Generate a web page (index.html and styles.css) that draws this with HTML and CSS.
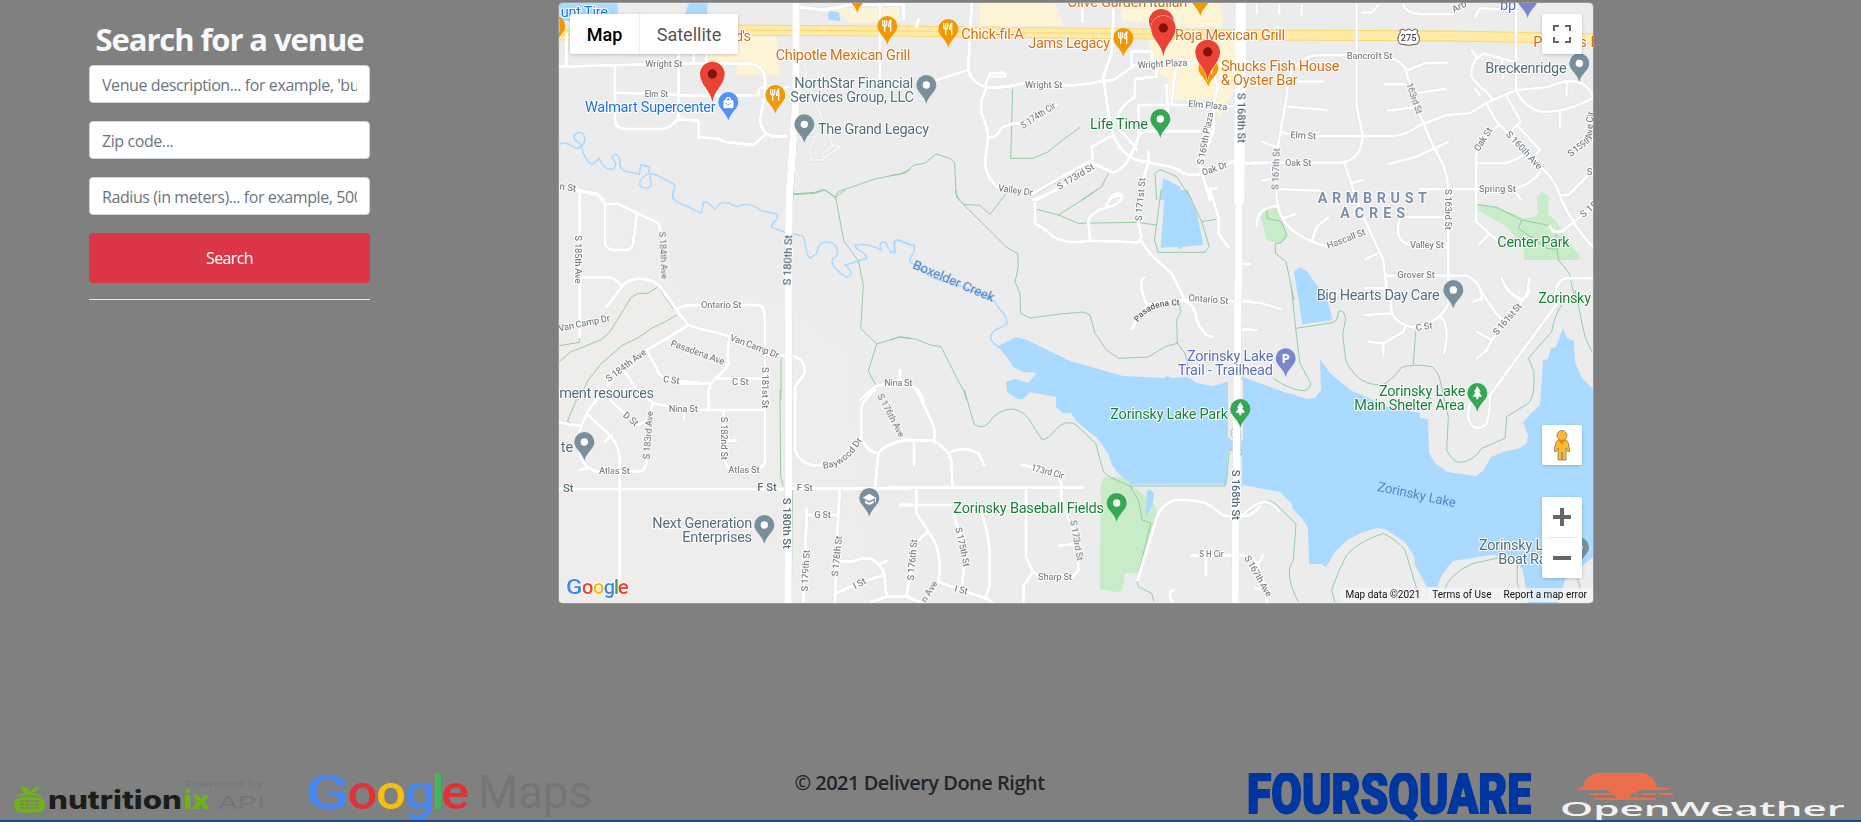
FILE: index.html
```html
<!DOCTYPE html>
<html lang="en">
<head>
<meta charset="utf-8">
<title>Delivery Done Right</title>
<link rel="stylesheet" href="styles.css">
</head>
<body>
<main class="content">
  <section class="search">
    <h2 class="search-title">Search for a venue</h2>
    <form class="search-form">
      <input class="field" type="text" placeholder="Venue description... for example, 'burgers'">
      <input class="field" type="text" placeholder="Zip code...">
      <input class="field" type="text" placeholder="Radius (in meters)... for example, 5000">
      <button class="submit" type="button">Search</button>
    </form>
    <hr class="rule">
  </section>
  <section class="map">
    <svg class="map-canvas" viewBox="559 3 1034 600">
      <defs>
        <g id="pin"><path d="M0 0C-6-26-30-34-30-56A30 30 0 1 1 30-56C30-34 6-26 0 0Z"/></g>
        <g id="dot"><use href="#pin"/><circle cy="-56" r="11" fill="#fff"/></g>
        <g id="food"><use href="#pin"/><path d="M-14-73v11q0 6 6 6v17M-8-73v13M-2-73v11q0 6-6 6M10-39v-34q-6 4-6 18h6" fill="none" stroke="#fff" stroke-width="4"/></g>
        <g id="tree"><use href="#pin"/><path d="M0-77l10 17h-5l9 15H3v8h-6v-8h-11l9-15h-5z" fill="#fff"/></g>
        <g id="marker"><path class="marker-body" d="M0 0C-3-36-37-52-37-86A37 37 0 1 1 37-86C37-52 3-36 0 0Z" fill="#ea4335"/><circle cy="-86" r="14" fill="#811411"/></g>
        <path id="pasadena-ct" d="M744 397Q775 348 850 346L900 344"/>
        <path id="baywood-dr" d="M820 236Q890 232 936 152L945 135"/>
      </defs>
      <rect x="559" y="3" width="1034" height="600" fill="#ececec"/>
      <path d="M559 190L660 210 680 290 780 300 850 350 870 603H559Z" fill="#eeedec"/>

      <!-- commercial blocks -->
      <g class="shop">
        <path class="nw" d="M460 110H680L690 225H560V195H470ZM840 25H1050V68H900Z"/>
        <path class="n" d="M0 10H28V70H0ZM270 10H495L520 78H270ZM690 10H990L1000 80H790L780 65H700ZM780 120H1035V260L990 350 970 330V300H830L835 240 780 200Z"/>
      </g>

      <!-- parks -->
      <g class="park">
        <path class="ne" d="M60 640L112 618 125 665 145 710 120 732 80 720ZM712 612L770 620 850 655 885 650 893 640 890 590 905 575 927 590 925 645 945 660 990 730 1018 765V780H852V745L800 680 712 630Z"/>
        <path class="s" d="M632 290L640 262 700 262 800 352 790 420 745 550 705 548 697 600 680 607 630 598Z"/>
      </g>

      <!-- water -->
      <g class="water">
        <path d="M997.5 346.5L1016 337 1025 339 1070 361 1123 376 1163 378 1167 376 1172 378 1187 377 1197 383 1213 386 1227 382 1243 377 1278 390 1307 399 1315 398 1321 390 1320 359 1330 373 1350 390 1373 400 1385 406 1420 413V418L1428 419 1429 453 1435 463 1447 472 1476 476 1483 471 1491 457 1503 452 1520 448 1527 443 1528 435 1523 423 1529 415 1540 405 1543 360 1548 359 1551 348 1556 347 1563 328 1567 338 1574 341 1575 362 1582 378 1593 389V557L1565 580 1558 603H1528L1523 570 1510 556 1490 555 1453 561 1442 575 1437 587 1427 587 1415 565 1414 556 1405 542 1385 529 1377 528 1363 532 1347 540 1335 552 1326 567 1322 564H1309L1308 528 1303 520 1292 508V504L1280 492 1243 485V487L1228 484.500H1131L1117 472 1112 465 1108 453 1097 438 1077 422 1071 413 1063 413 1056 407V397L1030 392 1023 399H1018L1007 392 1006 382 1015 379 1028 383 1037 373 1023 372 1013 367 1007 357Z"/>
        <path class="nw" d="M28 10H203V62H28ZM417 10H472V62H395ZM832 40L845 33 868 37 870 63 838 60Z"/>
        <path class="n" d="M820 535L870 560 885 600H810Z"/>
        <path class="c" d="M825 0H885L920 65 940 165 880 170 872 178 862 170 812 173Z"/>
        <path class="ne" d="M162 815L180 802 200 812 240 870 262 900 278 960 187 973 175 895Z"/>
        <path class="s" d="M770 305L780 298 792 310 788 345 767 380Z"/>
      </g>
      <path d="M1228 380H1243V440L1240 441H1232L1228 437ZM1228 450H1242V487H1226Z" fill="#ececec"/>
      <g class="creek">
        <path class="nw" d="M28 432C45 425 60 432 78 445 100 445 110 420 100 402 85 390 65 405 75 420 95 430 95 440 100 460 112 480 118 495 128 493L147 475C155 490 165 510 185 508 205 500 195 485 185 470 195 460 205 460 210 480 207 500 215 515 235 515L268 522 272 495 298 500 297 520C275 530 260 550 275 562 300 570 310 555 300 535 295 510 315 520 375 555 378 570 360 580 370 598"/>
        <path class="w" d="M370 0C360 30 385 40 410 48 430 55 440 70 455 68L460 38C475 30 485 50 495 58 510 35 520 30 560 50 600 35 605 45 635 63L680 72C690 95 665 90 665 112L710 128 758 137C770 160 765 195 780 205L800 190C805 150 830 155 845 158 865 170 870 195 850 205 835 225 870 250 890 262 915 255 900 235 885 225L950 205C950 180 915 185 915 165 945 160 975 170 993 180 985 155 1000 150 1010 162 1015 180 1025 190 1035 188 1040 170 1020 155 1040 150L1080 162"/>
        <path class="c" d="M0 188C25 190 5 160 20 150 45 150 50 170 72 165 80 195 55 195 60 215L130 265 220 290 315 335C325 360 355 375 350 402 325 420 310 415 302 440 300 455 315 460 325 472"/>
      </g>

      <!-- trails -->
      <g class="trail">
        <path class="nw" d="M728 582L795 577 822 568 855 592 865 575 975 537 1050 522 1080 508M738 425L728 600"/>
        <path class="n" d="M0 527L45 520 72 495 105 490 138 462 180 475 194 488 198 580 208 600M368 268L362 475H428L470 458 525 415 570 382M655 520L635 560 575 600M800 600L795 520 810 508 860 530 905 600"/>
        <path class="n" stroke-dasharray="12 6" d="M440 580L610 485"/>
        <path class="ne" d="M80 625L82 655 125 665 140 705 125 727 105 732 107 760 138 785 162 900M710 613L770 622 845 660 920 675 948 700 955 780 988 820 1005 900M845 660L835 685 880 715 920 745 950 748"/>
        <path class="w" d="M28 515L60 487 155 448 180 425 243 323 265 310H293L325 290M28 467L88 457V440M325 290L370 357M380 375L350 393 305 415 265 443 215 467 150 525 115 570 85 630M728 14L795 10 825 0 857 22 885 0M857 22L882 155 925 212 940 285 932 415 980 462 1045 442 1080 445M980 462L955 543 980 590M693 500V630"/>
        <path class="c" d="M198 0L200 22 220 43 270 46 300 73 345 15 355 0M220 43L350 172 383 190 385 230 375 275 390 310 392 370 420 384 510 372 580 366 600 375 615 430 650 480 685 505 775 501 825 470 862 460 885 490 895 530M862 460L860 390 872 365 868 340M440 58L505 75 600 15 620 0M505 75L565 100 740 97 800 105 813 0M800 105L793 150 805 187H945L958 170 935 95 890 0M935 95L980 88M0 450L30 440 80 448 120 465 153 470 205 573 220 600 230 630"/>
        <path class="sw" d="M80 28L52 95 85 105M690 0L692 260 700 290M727 300L724 635"/>
        <path class="s" d="M223 0L252 102Q275 120 295 100 325 55 370 57 400 65 415 85L455 148Q475 150 500 115 525 90 555 102L617 160 640 245Q650 260 720 288L745 330 757 390 783 400 740 570 745 590 785 610 792 635M720 288H1005L1010 265 1018 180 1055 180V195H1040M1065 370L1110 335M1030 115Q1015 130 1030 145H1052V115"/>
        <path class="se" d="M155 0L167 115 180 220 212 280Q210 300 190 302 150 300 100 265M167 115L280 98Q295 90 295 65 310 55 317 85L308 135 318 215Q340 255 365 270 400 290 435 282 460 265 485 232 520 220 575 230 595 245 600 270L625 380 620 480Q640 520 660 517 700 515 725 475L795 445 800 380 865 340Q885 325 882 245L865 205 935 125Q945 70 965 45M527 125L520 222M1005 0L1035 140 1055 185M0 670L25 665Q70 615 105 640L168 702 160 810Q130 850 175 935M285 938L275 900Q295 840 320 795 355 755 430 730 470 750 495 780L540 930M610 910Q625 850 700 820L770 805 832 815V880L850 935M1012 865L1022 900"/>
      </g>

      <!-- highway -->
      <path class="hwy-edge" d="M559 35L720 30 890 31 1250 35 1450 36 1593 39"/>
      <path class="hwy" d="M559 35L720 30 890 31 1250 35 1450 36 1593 39"/>
      <path class="hwy-mid" d="M559 35L720 30 890 31 1250 35"/>

      <!-- local streets -->
      <g class="road">
        <path class="nw" d="M28 200L420 190H600Q645 200 645 240V280L630 360Q635 400 670 410H710M50 100V200M195 198V360Q195 385 225 387H340Q360 385 385 355M198 278L385 285 430 288 625 285 628 265 645 260M385 160V358L445 362V412L505 415 520 425 610 435 645 405M430 160V185M470 160V190M750 22L820 30 900 15 1060 14V60M990 20V240M715 260L700 265M75 572L140 580 160 600M90 570V600"/>
        <path class="n" d="M245 10L235 200Q235 245 290 262 340 265 400 250M235 210L140 240M290 260L275 300V340Q300 400 292 430L285 490Q290 540 330 565M297 412Q320 415 335 385 350 370 395 370M470 340L500 315M288 250L300 220 340 218Q350 225 345 230H305M520 255Q560 260 640 242L670 240 735 195 890 190 960 185M672 10L665 160 640 230 655 340 668 400Q690 460 740 480L800 492Q860 500 880 520 920 530 940 520L1010 495 1025 485 1080 490M725 195V155H785L790 185M800 200V230L735 237V290Q690 320 685 345L690 390 735 440 740 450M860 205Q850 240 845 310M830 255L835 380M745 400V315H960L1030 320M960 395H770Q745 395 740 430L720 470Q700 510 670 518L610 490 605 440 670 405M605 480L430 580M610 510L440 600M775 455V490L755 550M960 190L985 260 970 310 970 395 930 500 960 600M960 565H980M670 590L695 585M578 20V65M85 60L80 80"/>
        <path class="ne" d="M170 200Q190 165 240 165H380Q490 165 500 220L540 345 580 440Q620 500 625 560V900M170 195Q145 210 140 290L110 460V560Q105 660 170 700 215 730 265 740M350 10V320L367 400Q370 480 300 488H40M125 395Q140 405 230 408H460Q500 405 540 375L620 345 690 340 740 308 830 270 920 262 970 245Q1040 235 1058 290M10 490H80M145 320L260 330M175 245H250M500 212L555 190 622 188M435 252H495M525 280L615 267M443 332L525 322M445 492L530 470 625 425M65 425L105 440M65 542L105 535M105 567L240 572M312 485L340 570 370 650 430 780 440 865M340 548L370 540M540 567H710L800 572M440 827H680Q730 850 725 900M375 865H440M375 778L410 762M480 652H620M480 655Q465 700 485 720 500 745 620 740M828 10V270Q850 320 900 335 970 340 1058 295M695 150L712 175 730 160 820 185 830 195M712 170Q690 200 695 230 720 265 740 275L755 295M740 310Q770 370 780 375L900 500Q950 540 960 590 1000 680 1058 740M775 375L720 430Q705 460 708 490V665L770 720M708 490H795Q830 480 850 465M830 375L900 450 880 470M800 290L843 365 810 395M900 515Q880 550 820 567L843 600M960 585H985L1050 520M930 680L940 695H965L1058 620M785 835Q800 880 850 900M868 835L860 890M1058 835H980Q945 840 945 900M215 725L230 680 265 652M50 680Q50 620 110 618M130 655L165 642M715 735L745 705M790 235L785 175M980 285V250M960 380V340M50 15V40M118 15V40M185 15V45M365 38H395L415 15M490 15Q500 40 540 42H640M705 50L720 25 815 30M705 265L720 285"/>
        <path class="w" d="M75 0L145 15 165 42H205L325 100 333 125M165 42V160Q170 178 190 180H235Q250 170 250 155L260 75M88 0V440M90 263H180Q195 265 215 288M170 350Q215 290 225 280 260 255 310 275 330 285 345 310L380 360 415 405M385 355Q400 345 440 345H620Q645 345 645 385V630M415 405Q440 415 500 428L540 440Q530 470 535 520 520 550 500 560 470 590 475 630M415 405Q370 435 290 480L240 520M290 480L330 555 350 570 480 582M380 580H480M500 565H645M220 540Q250 580 265 610M190 565L140 630M545 430L550 445M685 497H725Q765 505 765 550L735 590V630M1050 540V570L975 590 930 630"/>
        <path class="c" d="M435 40V100Q470 120 490 140 530 165 600 152L745 157 755 140 745 100M755 155Q780 195 800 210L845 250 880 320M430 30L500 0M600 150L595 90Q605 65 650 52 690 45 697 20 685 0 665 20L650 45M960 0L985 80V130L1015 172M762 262Q750 270 755 300L770 345M770 345L725 415M770 345Q820 335 880 330 920 350 920 390 940 440 968 440M880 325Q900 340 1030 335M1040 222H1080M1040 333H1080M1040 418H1080M100 630Q90 600 70 590M30 540V580"/>
        <path class="sw" d="M140 30Q110 60 90 120 75 190 110 230 130 245 150 245H270Q290 240 292 200M28 98L95 108M110 70L150 110Q205 150 208 200V290M110 235L90 240M180 30L240 85 265 105 290 90 310 40 360 50M265 0L310 40M440 60H645V215Q640 240 600 240H540Q522 220 520 190V60M475 60V0M402 65V90M520 150L558 152M165 155L185 135M28 297H700M208 295V570M735 0V180Q750 220 790 227H850M975 0Q930 40 935 60V150Q960 190 985 190L975 295M985 190Q1010 155 1080 150M725 295H1080M870 297L865 370 855 635M770 355V375H865M770 375L760 635M870 515H905Q940 500 970 508 1010 540 1005 580L1010 620M990 522L1010 512M1000 555L900 590 855 612M1080 620H1010L965 635M1050 345H1080"/>
        <path class="s" d="M0 165L35 150 130 152Q180 180 185 220L187 295M130 152Q140 130 125 95L80 0M72 155V225M175 190Q220 165 265 190L283 225M0 293H580M395 225L490 245Q515 260 515 295V340L560 440 565 540 550 560M80 295V370L115 425Q160 480 145 575L210 600 290 625 310 640M30 345H185M190 370L205 420 225 510 215 590M275 370Q300 440 298 500V590L285 625M115 425L75 460 50 615M0 620H50L100 640 145 580M408 295V500L428 545 400 590V635M428 545L450 560M508 467L555 462M743 570L800 385Q820 335 860 330 900 328 950 340 980 360 1000 377L1030 380 1080 375 1110 350M905 497H1060M948 500V555M850 600Q830 610 848 635M1095 595H1110"/>
        <path class="se" d="M0 35L60 38 125 58M0 120H50M450 0 455 65Q465 100 520 112 600 100 625 40M375 75L455 70M605 85Q630 110 612 190M385 155L430 160 490 125 495 110M430 160V195M870 0L755 150 740 180 710 205M710 125L755 150M800 0L840 30M720 0 765 65 790 95M700 35L725 25M955 35L750 315Q750 370 740 400 725 420 700 410 675 390 690 340M0 680Q50 635 75 635 100 640 118 665M35 800Q75 850 80 938M50 830 70 795"/>
      </g>
      <g class="road major">
        <path d="M796 3L796 100 789 200 788 603M1242 3L1239 195 1235 603"/>
        <path d="M1241 3L1239 200" stroke-width="11"/>
      </g>
      <g class="road inner"><path class="nw" d="M765 190L770 240 850 440 870 438M805 400Q770 440 785 480H815L870 440M740 410H800M815 465L850 430"/></g>

      <!-- street names -->
      <g class="street">
        <g class="nw"><text x="286" y="201" textLength="111">Wright St</text><text x="284" y="291" textLength="70" lengthAdjust="spacingAndGlyphs">Elm St</text><text x="28" y="568" transform="rotate(8 28 568)">n St</text></g>
        <g class="n"><text x="405" y="264" textLength="112">Wright St</text><text x="743" y="205" textLength="150" transform="rotate(-3 743 205)">Wright Plaza</text><text x="894" y="320" textLength="118" transform="rotate(5 894 320)">Elm Plaza</text><text x="400" y="386" textLength="118" lengthAdjust="spacingAndGlyphs" transform="rotate(-33 400 386)">S 174th Cir</text><text x="508" y="570" textLength="125" transform="rotate(-31 508 570)">S 173rd St</text><text x="323" y="573" textLength="105" transform="rotate(8 323 573)">Valley Dr</text><text x="940" y="527" textLength="78" lengthAdjust="spacingAndGlyphs" transform="rotate(-19 940 527)">Oak Dr</text><text x="940" y="496" textLength="160" transform="rotate(-79 940 496)">S 169th Plaza</text></g>
        <g class="ne"><text x="320" y="177" textLength="137">Bancroft St</text><text x="151" y="414" textLength="77" transform="rotate(3 151 414)">Elm St</text><text x="135" y="497" textLength="79">Oak St</text><text x="717" y="576" textLength="111">Spring St</text><text x="510" y="743" textLength="102">Valley St</text><text x="472" y="835" textLength="113">Grover St</text><text x="265" y="747" textLength="122" transform="rotate(-21 265 747)">Hascall St</text><text x="114" y="570" textLength="125" transform="rotate(-88 114 570)">S 167th St</text><text x="498" y="252" textLength="97" transform="rotate(71 498 252)">163rd St</text><text x="616" y="567" textLength="123" transform="rotate(90 616 567)">S 163rd St</text><text x="796" y="404" textLength="145" transform="rotate(47 796 404)">S 160th Ave</text><text x="716" y="456" textLength="78" transform="rotate(-57 716 456)">Oak St</text><text x="992" y="472" textLength="84" transform="rotate(-38 992 472)">S 159th</text><text x="1056" y="418" textLength="84" transform="rotate(-87 1056 418)">Ave Cir</text><text x="1030" y="654" transform="rotate(-40 1030 654)">S 15</text><text x="642" y="38" transform="rotate(-28 642 38)">Arb</text><text x="1040" y="525">S</text></g>
        <g class="w"><text x="76" y="136" textLength="145" transform="rotate(90 76 136)">S 185th Ave</text><text x="328" y="125" textLength="143" transform="rotate(87 328 125)">S 184th Ave</text><text x="28" y="425" textLength="157" transform="rotate(-12 28 425)">Van Camp Dr</text><text x="453" y="354" textLength="121">Ontario St</text><text x="176" y="577" textLength="144" transform="rotate(-37 176 577)">S 184th Ave</text><text x="360" y="467" textLength="170" transform="rotate(20 360 467)">Pasadena Ave</text><text x="538" y="450" textLength="155" transform="rotate(21 538 450)">Van Camp Dr</text><text x="338" y="576" textLength="50" transform="rotate(8 338 576)">C St</text><text x="546" y="585" textLength="50">C St</text><text x="637" y="531" textLength="124" transform="rotate(90 637 531)">S 181st St</text><text x="1003" y="588" textLength="84">Nina St</text></g>
        <g class="c"><text x="895" y="332" textLength="120" transform="rotate(5 895 332)">Ontario St</text><text class="dark"><textPath href="#pasadena-ct">Pasadena Ct</textPath></text><text x="755" y="94" textLength="130" transform="rotate(-85 755 94)">S 171st St</text></g>
        <g class="sw"><text x="356" y="65" textLength="88">Nina St</text><text x="217" y="78" textLength="50" transform="rotate(41 217 78)">D St</text><text x="300" y="209" textLength="145" transform="rotate(-86 300 209)">S 183rd Ave</text><text x="512" y="80" textLength="130" transform="rotate(90 512 80)">S 182nd St</text><text x="147" y="253" textLength="93">Atlas St</text><text x="535" y="249" textLength="94">Atlas St</text><text x="740" y="303" textLength="48">F St</text><text><textPath href="#baywood-dr">Baywood Dr</textPath></text><text x="980" y="18" textLength="143" transform="rotate(62 980 18)">S 176th Ave</text><text x="793" y="383" textLength="50">G St</text><text x="773" y="605" textLength="125" transform="rotate(-87 773 605)">S 179th St</text><text x="864" y="560" textLength="122" transform="rotate(-84 864 560)">S 178th St</text><text x="915" y="598" textLength="40" transform="rotate(-28 915 598)">I St</text></g>
        <g class="s"><text x="422" y="241" textLength="100" lengthAdjust="spacingAndGlyphs" transform="rotate(15 422 241)">173rd Cir</text><text x="540" y="392" textLength="123" transform="rotate(80 540 392)">S 173rd St</text><text x="196" y="414" textLength="120" transform="rotate(78 196 414)">S 175th St</text><text x="71" y="572" textLength="124" transform="rotate(-85 71 572)">S 176th St</text><text x="444" y="570" textLength="102">Sharp St</text><text x="192" y="604" textLength="40" transform="rotate(14 192 604)">I St</text><text x="108" y="640" transform="rotate(-58 108 640)">n Ave</text><text x="928" y="502" textLength="73" lengthAdjust="spacingAndGlyphs">S H Cir</text></g>
        <g class="se"><text x="529" y="123" textLength="50" transform="rotate(-9 529 123)">C St</text><text x="771" y="137" textLength="116" transform="rotate(-49 771 137)">S 161st St</text><text x="12" y="803" textLength="138" transform="rotate(60 12 803)">S 167th Ave</text></g>
        <g class="large"><g class="w"><text x="723" y="287" textLength="152" transform="rotate(-88 723 287)">S 180th St</text></g><g class="sw"><text x="698" y="323" textLength="153" transform="rotate(90 698 323)">S 180th St</text><text x="39" y="306">St</text><text x="622" y="304" textLength="58">F St</text></g><g class="n"><text x="1042" y="278" textLength="151" transform="rotate(90 1042 278)">S 168th St</text></g><g class="s"><text x="1026" y="239" textLength="151" transform="rotate(90 1026 239)">S 168th St</text></g></g>
      </g>
      <g class="ne shield"><path d="M480 91L487 87 497 92 506 87 516 92 525 87 533 91 531 98Q545 118 532 132L506 136 480 132Q467 118 481 98Z"/><text x="482" y="122" textLength="48">275</text></g>

      <!-- place pins -->
      <g class="nw"><use href="#food" x="16" y="134" fill="#f29900"/><use href="#food" x="1012" y="134" fill="#f29900"/><use href="#food" x="676" y="341" fill="#f29900"/><use href="#pin" x="922" y="39" fill="#f29900"/><use href="#pin" x="535" y="362" fill="#5491f5"/><path d="M522 302h27v21h-27z" fill="#fff" stroke="#fff" stroke-width="3"/><path d="M528 301q0-8 7-8t7 8" fill="none" stroke="#fff" stroke-width="3.500"/><path d="M528 309q7 10 14 0" fill="none" stroke="#5491f5" stroke-width="3"/><use href="#dot" x="763" y="429" fill="#78909c"/></g>
      <g class="n"><use href="#food" x="175" y="143" fill="#f29900"/><use href="#food" x="700" y="170" fill="#f29900"/><use href="#food" x="955" y="260" fill="#f29900"/><use href="#pin" x="931" y="48" fill="#f29900"/><use href="#dot" x="109" y="311" fill="#78909c"/><use href="#dot" x="811" y="413" fill="#34a853"/></g>
      <g class="ne"><use href="#dot" x="1018" y="246" fill="#78909c"/><use href="#pin" x="863" y="54" fill="#7986cb"/><use href="#dot" x="640" y="926" fill="#78909c"/></g>
      <g class="sw"><use href="#dot" x="103" y="212" fill="#78909c"/><use href="#dot" x="643" y="461" fill="#78909c"/><use href="#pin" x="958" y="380" fill="#78909c"/><path d="M938 323l20-12 20 12-20 10zM945 331v8q13 10 26 0v-8l-13 7zM975 324h3v13h-3z" fill="#fff"/></g>
      <g class="s"><use href="#dot" x="680" y="395" fill="#34a853"/><use href="#tree" x="1051" y="113" fill="#34a853"/></g>
      <g class="se"><use href="#tree" x="712" y="365" fill="#34a853"/><use href="#pin" x="137" y="261" fill="#7986cb"/><text x="126" y="220" class="parking">P</text><use href="#dot" x="1017" y="828" fill="#78909c"/></g>

      <!-- place names -->
      <g class="poi">
        <g class="nw"><g class="blue"><text x="32" y="50" textLength="142">unt Tire</text><text x="105" y="337" textLength="392">Walmart Supercenter</text></g><g class="orange"><text x="555" y="122" textLength="48">d's</text><text x="677" y="180" textLength="404">Chipotle Mexican Grill</text></g><g class="slate"><text x="733" y="264" textLength="357">NorthStar Financial</text><text x="721" y="307" textLength="371">Services Group, LLC</text><text x="804" y="402" textLength="333">The Grand Legacy</text></g></g>
        <g class="n"><g class="orange"><text x="214" y="117" textLength="187">Chick-fil-A</text><text x="415" y="144" textLength="245">Jams Legacy</text><text x="532" y="22" textLength="360">Olive Garden Italian</text><text x="855" y="120" textLength="330">Roja Mexican Grill</text><text x="993" y="213" textLength="355">Shucks Fish House</text><text x="993" y="255" textLength="230">&amp; Oyster Bar</text></g><g class="green"><text x="600" y="387" textLength="174">Life Time</text></g></g>
        <g class="ne"><text class="violet" x="780" y="30">bp</text><g class="orange"><text x="880" y="140">P</text><text x="1018" y="140">s F</text></g><g class="slate"><text x="736" y="219" textLength="244">Breckenridge</text><text x="230" y="899" textLength="369">Big Hearts Day Care</text></g><g class="green"><text x="772" y="741" textLength="217">Center Park</text><text x="895" y="910" textLength="158">Zorinsky</text></g><g class="area"><text x="233" y="608" textLength="328">ARMBRUST</text><text x="301" y="654" textLength="194">ACRES</text></g></g>
        <g class="w slate"><text x="28" y="624" textLength="284">ment resources</text></g>
        <g class="c"><text class="creek-name" x="66" y="233" textLength="262" transform="rotate(23 66 233)">Boxelder Creek</text><g class="violet"><text x="891" y="514" textLength="259">Zorinsky Lake</text><text x="863" y="555" textLength="286">Trail - Trailhead</text></g></g>
        <g class="sw slate"><text x="32" y="186">te</text><text x="307" y="414" textLength="300">Next Generation</text><text x="397" y="456" textLength="209">Enterprises</text></g>
        <g class="s green"><text x="661" y="87" textLength="353">Zorinsky Lake Park</text><text x="190" y="369" textLength="452">Zorinsky Baseball Fields</text></g>
        <g class="se"><g class="green"><text x="417" y="318" textLength="259">Zorinsky Lake</text><text x="343" y="360" textLength="331">Main Shelter Area</text></g><g class="slate"><text x="717" y="780" textLength="259">Zorinsky Lake</text><text x="775" y="822" textLength="205">Boat Ramp</text></g><text class="lake-name" x="410" y="602" textLength="240" transform="rotate(12 410 602)">Zorinsky Lake</text></g>
      </g>

      <!-- result markers -->
      <g class="nw"><use href="#marker" x="487" y="308"/></g>
      <g class="n"><use href="#marker" x="814" y="150"/><use href="#marker" x="820" y="170"/><use href="#marker" x="953" y="242"/></g>

      <g class="sw google-mark"><text x="48" y="612" fill="#4285f4" textLength="49" lengthAdjust="spacingAndGlyphs">G</text><text x="96" y="612" fill="#ea4335" textLength="34" lengthAdjust="spacingAndGlyphs">o</text><text x="129" y="612" fill="#fbbc04" textLength="34" lengthAdjust="spacingAndGlyphs">o</text><text x="161" y="612" fill="#4285f4" textLength="34" lengthAdjust="spacingAndGlyphs">g</text><text x="192" y="612" fill="#34a853">l</text><text x="203" y="612" fill="#ea4335" textLength="33" lengthAdjust="spacingAndGlyphs">e</text></g>
    </svg>
    <div class="map-types"><button class="type active">Map</button><button class="type">Satellite</button></div>
    <button class="control fullscreen" aria-label="Fullscreen"><svg width="18" height="18" viewBox="0 0 18 18"><path d="M0 0h6v2H2v4H0zM12 0h6v6h-2V2h-4zM0 12h2v4h4v2H0zM16 12h2v6h-6v-2h4z" fill="#666"/></svg></button>
    <button class="control pegman" aria-label="Street View"><svg width="18" height="31" viewBox="0 0 18 31"><g fill="#fdbc2c" stroke="#80786b" stroke-width=".8"><path d="M5 10h8l2 2 2 9-2 1-2-4v12H9.500l-.5-8-.5 8H5V18l-2 4-2-1 2-9z"/><circle cx="9" cy="5.500" r="5"/></g><path d="M5.500 10h7L9 15z" fill="#e5812b"/></svg></button>
    <div class="zoom"><button class="zoom-btn" aria-label="Zoom in"><svg width="18" height="18"><path d="M7 0h4v7h7v4h-7v7H7v-7H0V7h7z" fill="#666"/></svg></button><span class="zoom-line"></span><button class="zoom-btn" aria-label="Zoom out"><svg width="18" height="18"><path d="M0 7h18v4H0z" fill="#666"/></svg></button></div>
    <div class="legal"><span>Map data ©2021</span><span>Terms of Use</span><span>Report a map error</span></div>
  </section>
</main>
<footer class="footer">
  <div class="logos">
    <svg class="logo" width="283" height="47" viewBox="0 0 283 47">
      <g fill="#6cb512"><path d="M14 20Q7 19 6 13 13 13 16 19 19 14 25 14 23 19 17 20Z"/><path d="M3 24Q6 19.500 15 19.500 25 19.500 28 24Q15 20 3 24Z"/><path d="M2 26Q15 21 29 26 31 29 31 33 30 39 23 39.500H8Q1 39 0 33 0 29 2 26Z"/></g>
      <path d="M6 28h19M6 31.500h19M6 35h19" fill="none" stroke="#808080" stroke-width="1.800" stroke-dasharray="4 1"/>
      <text class="nutri" x="34" y="36" textLength="134" lengthAdjust="spacingAndGlyphs">nutrition</text>
      <text class="nutri ix" x="169" y="36" textLength="27" lengthAdjust="spacingAndGlyphs">ix</text>
      <text class="powered" x="171" y="14" textLength="78" lengthAdjust="spacingAndGlyphs">Powered by</text>
      <text class="api" x="204" y="36" textLength="47" lengthAdjust="spacingAndGlyphs">API</text>
    </svg>
    <svg class="logo" width="283" height="47" viewBox="0 0 283 47">
      <g class="gmaps"><text x="-3" y="35.500" fill="#4a86f0" textLength="45" lengthAdjust="spacingAndGlyphs">G</text><text x="39.500" y="35.500" fill="#dd3338" textLength="30" lengthAdjust="spacingAndGlyphs">o</text><text x="68" y="35.500" fill="#f5c011" textLength="30" lengthAdjust="spacingAndGlyphs">o</text><text x="96.500" y="35.500" fill="#4a86f0" textLength="30" lengthAdjust="spacingAndGlyphs">g</text><text x="124" y="35.500" fill="#40b95a">l</text><text x="133" y="35.500" fill="#dd3338" textLength="28" lengthAdjust="spacingAndGlyphs">e</text></g>
      <text class="gmaps-word" x="170" y="35" textLength="114" lengthAdjust="spacingAndGlyphs">Maps</text>
    </svg>
  </div>
  <h5 class="copyright">© 2021 Delivery Done Right</h5>
  <div class="logos">
    <svg class="logo" width="283" height="47" viewBox="0 0 283 47"><text class="foursquare" x="-1" y="40" textLength="285" lengthAdjust="spacingAndGlyphs">FOURSQUARE</text></svg>
    <svg class="logo" width="283" height="47" viewBox="0 0 283 47">
      <path d="M35 0H83Q94 4 96 14L108 15V17H80L69 22V24L95 25V27H34V25H55L53 22H28V20H50L47 17H17V15L22 14Q23 4 35 0ZM74 20H112V22H74Z" fill="#ec6e4c"/>
      <path d="M79 20V23M96 20V23" stroke="#808080" stroke-width="3"/>
      <text class="weather" x="-1" y="43" textLength="285" lengthAdjust="spacingAndGlyphs">OpenWeather</text>
    </svg>
  </div>
</footer>
</body>
</html>
```

FILE: styles.css
```css
* { box-sizing: border-box; }
body { margin: 0; height: 822px; overflow: hidden; background: #808080; display: flex; flex-direction: column; font-family: "Open Sans", "Noto Sans", sans-serif; color: #212529; }
button { border: 0; padding: 0; font: inherit; background: #fff; }

.content { flex: 1; display: flex; align-items: flex-start; gap: 189px; padding: 3px 0 0 89px; }
.search { width: 281px; padding-top: 17px; }
.search-title { margin: 0 0 7px; font-size: 31px; line-height: 38px; font-weight: 700; letter-spacing: -1.1px; color: #f8f9fa; text-align: center; white-space: nowrap; }
.search-form { display: flex; flex-direction: column; gap: 18px; }
.field { width: 100%; height: 38px; padding: 8px 12px 6px; border: 1px solid #ced4da; border-radius: 4px; font: 16px "Open Sans", "Noto Sans", sans-serif; letter-spacing: -.42px; color: #495057; }
.field::placeholder { color: #6c757d; opacity: 1; }
.submit { height: 50px; border-radius: 4px; background: #dc3545; color: #fff; font-size: 16px; letter-spacing: -.6px; }
.rule { margin: 16px 0 0; border: 0; height: 1px; background: #e6e7e8; }

.map { position: relative; width: 1034px; height: 600px; border-radius: 4px; overflow: hidden; font-family: Roboto, sans-serif; box-shadow: 0 0 0 1px #989898; }
.map-canvas { display: block; width: 1034px; height: 600px; font-family: Roboto, sans-serif; }

/* each map tile is drawn at three units per pixel */
.nw { transform: translate(550px, 0) scale(.33333); }
.n { transform: translate(890px, 0) scale(.33333); }
.ne { transform: translate(1240px, 0) scale(.33333); }
.w { transform: translate(550px, 190px) scale(.33333); }
.c { transform: translate(890px, 190px) scale(.33333); }
.sw { transform: translate(550px, 390px) scale(.33333); }
.s { transform: translate(890px, 390px) scale(.33333); }
.se { transform: translate(1240px, 290px) scale(.33333); }

.shop { fill: #fdf4d6; }
.park { fill: #c8ebc8; }
.water { fill: #aadaff; }
.creek { fill: none; stroke: #aadaff; stroke-width: 4.5; }
.trail { fill: none; stroke: #87c79a; stroke-width: 2.6; }
.hwy-edge { fill: none; stroke: #f8d778; stroke-width: 11; }
.hwy { fill: none; stroke: #ffeaa6; stroke-width: 9; }
.hwy-mid { fill: none; stroke: #f9dd86; stroke-width: 1.5; }
.road { fill: none; stroke: #fff; stroke-width: 10; stroke-linecap: round; stroke-linejoin: round; filter: drop-shadow(0 0 .6px #b9bdc6); }
.major { stroke-width: 7.5; }
.inner { stroke: #f5f6f8; stroke-width: 7; }

.street { font-size: 28.5px; font-weight: 500; fill: #7e868c; stroke: #fff; stroke-width: 6px; stroke-linejoin: round; paint-order: stroke; }
.street .large { font-size: 34px; fill: #5b6b74; }
.street .dark { fill: #555; font-size: 25px; stroke-width: 3px; }
.shield { font-size: 28px; font-weight: 500; fill: #444; }
.shield path { fill: #fff; stroke: #555; stroke-width: 3; }
.poi { font-size: 43.5px; stroke: #fff; stroke-width: 6px; stroke-linejoin: round; paint-order: stroke; }
.blue { fill: #1a73e8; }
.orange { fill: #d56e0c; }
.slate { fill: #546e7a; }
.green { fill: #188038; }
.violet { fill: #5c6bc0; }
.area { fill: #7b8fa8; font-weight: 700; font-size: 43px; }
.creek-name { fill: #3d78c0; stroke: none; font-size: 40px; }
.lake-name { fill: #5a86c8; stroke: none; font-size: 40px; }
.parking { font-size: 36px; font-weight: 900; fill: #fff; }
.marker-body { stroke: #fff; stroke-width: 2.5px; paint-order: stroke; }
.google-mark { font-size: 58px; font-weight: 500; stroke: #fff; stroke-width: 4px; paint-order: stroke; }

.map-types { position: absolute; left: 11px; top: 11px; height: 40px; display: flex; border-radius: 2px; box-shadow: 0 1px 4px -1px rgba(0,0,0,.3); }
.type { width: 98px; font-size: 18px; color: #565656; border-radius: 2px; }
.type.active { width: 70px; color: #000; font-weight: 500; border-right: 1px solid #eee; }
.control { position: absolute; right: 11px; width: 40px; height: 40px; border-radius: 2px; display: grid; place-items: center; box-shadow: 0 1px 4px -1px rgba(0,0,0,.3); }
.fullscreen { top: 11px; }
.pegman { top: 422px; }
.zoom { position: absolute; right: 11px; top: 494px; width: 40px; height: 81px; background: #fff; border-radius: 2px; display: flex; flex-direction: column; align-items: center; box-shadow: 0 1px 4px -1px rgba(0,0,0,.3); }
.zoom-btn { width: 40px; height: 40px; display: grid; place-items: center; background: none; }
.zoom-line { width: 30px; height: 1px; background: #e6e6e6; }
.legal { position: absolute; right: 0; bottom: 1px; height: 14px; display: flex; gap: 1px; font-size: 10px; line-height: 14px; color: #111; }
.legal span { padding: 0 6px 0 5px; background: rgba(245,245,245,.75); white-space: nowrap; }

.footer { height: 49px; border-bottom: 2px solid #1b4c8c; display: flex; justify-content: space-between; align-items: flex-start; padding: 0 17px 0 14px; }
.logos { display: flex; gap: 30px; }
.logos:first-child { gap: 11px; }
.logo { display: block; overflow: hidden; }
.copyright { margin: -2px 0 0; font-size: 20px; line-height: 24px; font-weight: 600; letter-spacing: -.5px; white-space: nowrap; }
.nutri { font: 800 25px Inter, sans-serif; fill: #1c1c1c; }
.nutri.ix { fill: #6cb512; }
.powered { font: 9px "Liberation Sans", sans-serif; fill: #757575; }
.api { font: 500 18px "Liberation Sans", sans-serif; fill: #757575; }
.gmaps { font: 500 48px Roboto, sans-serif; }
.gmaps-word { font: 400 46px Roboto, sans-serif; fill: #757575; }
.foursquare { font: 900 56px Roboto, sans-serif; fill: #0036a0; stroke: #0036a0; stroke-width: 1.8px; }
.weather { font: 600 19px "Open Sans", sans-serif; fill: #f2f2f2; }
```
